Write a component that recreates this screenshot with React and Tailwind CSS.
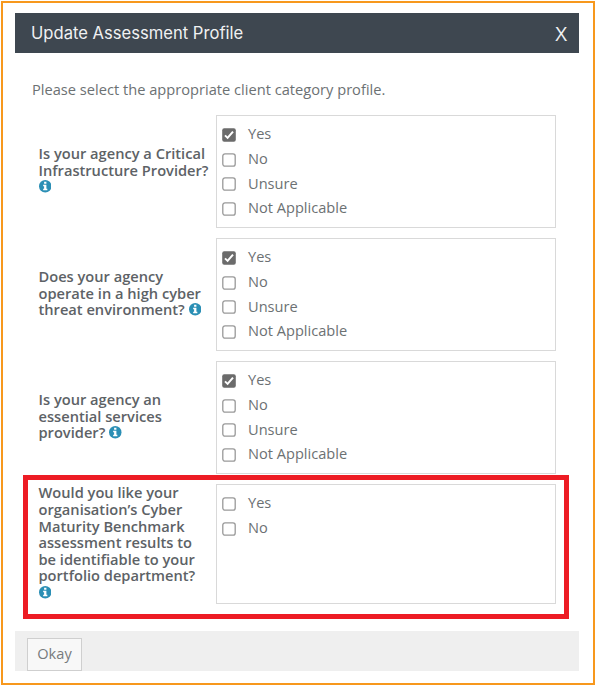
import { useState } from "react";

const questions = [
    {
        id: "infrastructure",
        lines: ["Is your agency a Critical", "Infrastructure Provider?", ""],
        options: ["Yes", "No", "Unsure", "Not Applicable"],
        selected: "Yes",
    },
    {
        id: "threat",
        lines: ["Does your agency", "operate in a high cyber", "threat environment?"],
        options: ["Yes", "No", "Unsure", "Not Applicable"],
        selected: "Yes",
    },
    {
        id: "essential",
        lines: ["Is your agency an", "essential services", "provider?"],
        options: ["Yes", "No", "Unsure", "Not Applicable"],
        selected: "Yes",
    },
    {
        id: "benchmark",
        lines: [
            "Would you like your",
            "organisation’s Cyber",
            "Maturity Benchmark",
            "assessment results to",
            "be identifiable to your",
            "portfolio department?",
            "",
        ],
        options: ["Yes", "No"],
        selected: null,
        highlighted: true,
    },
];

const InfoIcon = () => (
    <svg viewBox="0 0 12 12" className="size-[12.5px] shrink-0">
        <circle cx="6" cy="6" r="6" fill="#2b8fb5" />
        <path d="M4.9 1.7h2.2v1.9H4.9zM4 4.6h3.1v3.9H8v1.4H4V8.5h.9V6H4z" fill="#fff" />
    </svg>
);

const Checkbox = ({ checked }) => (
    <svg viewBox="0 0 14 14" className="size-[14px] shrink-0">
        {checked ? (
            <>
                <rect x="0.2" y="0.2" width="13.6" height="13.6" rx="2" fill="#6b6b6b" />
                <path d="M3 7.4l2.6 2.5L11 3.6" fill="none" stroke="#fff" strokeWidth="2" />
            </>
        ) : (
            <rect x="0.8" y="0.8" width="12.4" height="12.4" rx="2.2" fill="#fff" stroke="#999" strokeWidth="1.3" />
        )}
    </svg>
);

const Question = ({ question, value, onChange }) => (
    <div className="relative flex items-center">
        <div className="w-[178px] shrink-0 pb-[3px] pl-[0.5px] text-[14.65px] leading-[16.6px] font-semibold text-[#5d6266]">
            {question.lines.map((line, index) => (
                <div key={index} className="flex h-[16.6px] items-center gap-1 whitespace-nowrap">
                    {line && <span>{line}</span>}
                    {index === question.lines.length - 1 && <InfoIcon />}
                </div>
            ))}
        </div>
        <div
            className={`w-[340px] border border-[#d9d9d9] pt-[7px] pl-[5px] ${
                question.highlighted ? "h-[120px]" : "h-[113px]"
            }`}
        >
            {question.options.map((option) => (
                <button
                    key={option}
                    type="button"
                    role="checkbox"
                    aria-checked={value === option}
                    onClick={() => onChange(option)}
                    className="flex h-[24.6px] w-full items-center gap-3 text-[14.6px] text-[#6c7173]"
                >
                    <Checkbox checked={value === option} />
                    <span className="pb-[2px]">{option}</span>
                </button>
            ))}
        </div>
        {question.highlighted && (
            <div className="pointer-events-none absolute -top-[9px] -left-[15px] h-[144px] w-[546px] border-[5px] border-[#ed1c24]" />
        )}
    </div>
);

const App = () => {
    const [answers, setAnswers] = useState(
        Object.fromEntries(questions.map((question) => [question.id, question.selected]))
    );

    return (
        <div className="h-[686px] w-[596px] bg-white pt-px pl-px font-['Open_Sans','Noto_Sans',sans-serif]">
            <div className="h-[684px] w-[594px] border-2 border-[#f7981d] px-[12px] pt-[10px]">
                <div className="flex h-[40px] w-[564px] items-center justify-between bg-[#3e4750] pr-[12px] pl-[16px] text-white">
                    <h1 className="pt-px font-['Inter',sans-serif] text-[16.6px] text-[#f0f1f2]">Update Assessment Profile</h1>
                    <button type="button" className="text-[20.5px] leading-none text-[#f0f1f2]">X</button>
                </div>

                <p className="mt-[26px] ml-[17px] h-5 text-[14.65px] leading-5 text-[#6c7173]">
                    Please select the appropriate client category profile.
                </p>

                <div className="mt-[16px] ml-[23px] flex flex-col gap-[10px]">
                    {questions.map((question) => (
                        <Question
                            key={question.id}
                            question={question}
                            value={answers[question.id]}
                            onChange={(option) => setAnswers({ ...answers, [question.id]: option })}
                        />
                    ))}
                </div>

                <div className="mt-[27px] flex h-[40px] w-[564px] items-end bg-[#efefef] pl-[12px]">
                    <button
                        type="button"
                        className="h-[33px] w-[55px] border border-[#cfcfcf] bg-[#f8f8f8] pb-[2px] text-[14.6px] text-[#777b7d]"
                    >
                        Okay
                    </button>
                </div>
            </div>
        </div>
    );
};

export default App;
